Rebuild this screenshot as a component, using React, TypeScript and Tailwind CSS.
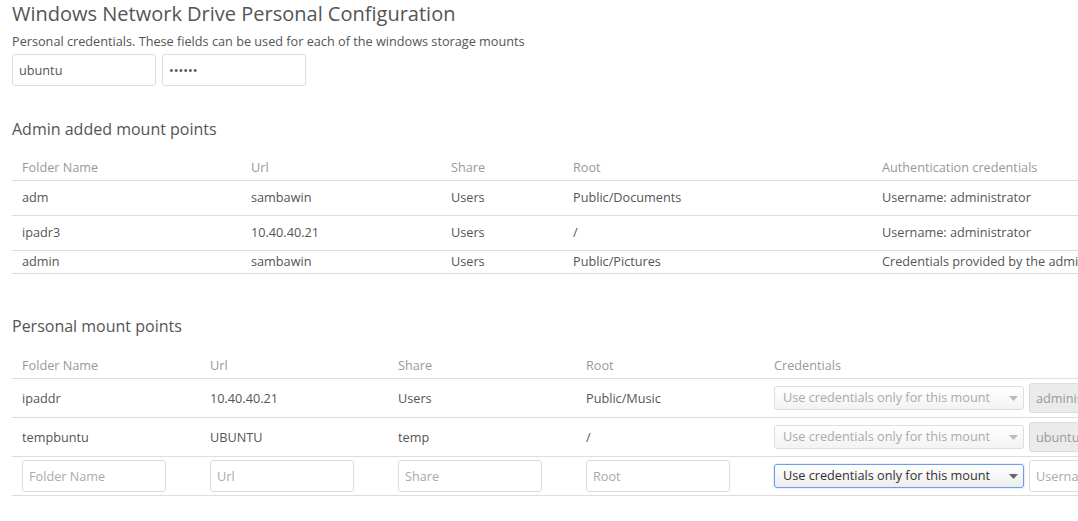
import React from 'react';

const adminMounts = [
  { name: 'adm', url: 'sambawin', share: 'Users', root: 'Public/Documents', auth: 'Username: administrator', h: 'h-[35px]' },
  { name: 'ipadr3', url: '10.40.40.21', share: 'Users', root: '/', auth: 'Username: administrator', h: 'h-[35px]' },
  { name: 'admin', url: 'sambawin', share: 'Users', root: 'Public/Pictures', auth: 'Credentials provided by the administrator', h: 'h-[23px]' },
];

const personalMounts = [
  { name: 'ipaddr', url: '10.40.40.21', share: 'Users', root: 'Public/Music', user: 'administrator' },
  { name: 'tempbuntu', url: 'UBUNTU', share: 'temp', root: '/', user: 'ubuntu' },
];

const inputCls =
  'h-[32px] w-[144px] rounded-[3px] border border-[#ddd] bg-white px-[6px] text-[12.7px] text-[#555] placeholder:text-[#aaa] outline-none';

const CredSelect: React.FC<{ active?: boolean }> = ({ active }) => (
  <div className="relative w-[250px] shrink-0">
    <select
      disabled={!active}
      defaultValue="mount"
      className={
        active
          ? 'h-[24px] w-full appearance-none rounded-[3px] border border-[#6d9eeb] bg-gradient-to-b from-white to-[#ededed] pl-[8px] text-[12.7px] text-[#333] outline-none shadow-[0_0_2px_rgba(80,140,230,0.5)]'
          : 'h-[24px] w-full appearance-none rounded-[3px] border border-[#ddd] bg-gradient-to-b from-white to-[#f3f3f3] pl-[8px] text-[12.7px] text-[#aaa] outline-none'
      }
    >
      <option value="mount">Use credentials only for this mount</option>
    </select>
    <svg className="pointer-events-none absolute right-[6px] top-[10px]" width="9" height="5" viewBox="0 0 9 5">
      <path d="M0 0h9L4.5 5z" fill={active ? '#666' : '#bbb'} />
    </svg>
  </div>
);

export default function App() {
  return (
    <div className="w-[1078px] h-[521px] overflow-hidden bg-white pl-[12px] font-['Open_Sans',sans-serif] text-[#555]">
      <h1 className="text-[20px] leading-[28px] font-normal text-[#555]">Windows Network Drive Personal Configuration</h1>
      <p className="mt-[4px] text-[12.7px] leading-[18px]">
        Personal credentials. These fields can be used for each of the windows storage mounts
      </p>
      <div className="mt-[4px] flex gap-[6px]">
        <input className={inputCls} defaultValue="ubuntu" />
        <input className={inputCls} type="password" defaultValue="ubuntu" />
      </div>

      <h2 className="mt-[32px] text-[16px] leading-[22px] font-normal">Admin added mount points</h2>
      <table className="mt-[14px] table-fixed w-[1200px] text-[12.7px] text-left">
        <colgroup>
          <col className="w-[229px]" />
          <col className="w-[200px]" />
          <col className="w-[122px]" />
          <col className="w-[309px]" />
          <col />
        </colgroup>
        <thead>
          <tr className="h-[26px] border-b border-[#ddd] text-[#999]">
            <th className="pl-[10px] pt-[2px] font-normal">Folder Name</th>
            <th className="pl-[10px] pt-[2px] font-normal">Url</th>
            <th className="pl-[10px] pt-[2px] font-normal">Share</th>
            <th className="pl-[10px] pt-[2px] font-normal">Root</th>
            <th className="pl-[10px] pt-[2px] font-normal">Authentication credentials</th>
          </tr>
        </thead>
        <tbody>
          {adminMounts.map((m) => (
            <tr key={m.name} className={`${m.h} border-b border-[#ddd]`}>
              <td className="pl-[10px] pt-[1px]">{m.name}</td>
              <td className="pl-[10px] pt-[1px]">{m.url}</td>
              <td className="pl-[10px] pt-[1px]">{m.share}</td>
              <td className="pl-[10px] pt-[1px]">{m.root}</td>
              <td className="pl-[10px] pt-[1px] whitespace-nowrap">{m.auth}</td>
            </tr>
          ))}
        </tbody>
      </table>

      <h2 className="mt-[41px] text-[16px] leading-[22px] font-normal">Personal mount points</h2>
      <table className="mt-[16px] table-fixed w-[1300px] text-[12.7px] text-left">
        <colgroup>
          <col className="w-[188px]" />
          <col className="w-[188px]" />
          <col className="w-[188px]" />
          <col className="w-[188px]" />
          <col />
        </colgroup>
        <thead>
          <tr className="h-[26px] border-b border-[#ddd] text-[#999]">
            <th className="pl-[10px] font-normal">Folder Name</th>
            <th className="pl-[10px] font-normal">Url</th>
            <th className="pl-[10px] font-normal">Share</th>
            <th className="pl-[10px] font-normal">Root</th>
            <th className="pl-[10px] font-normal">Credentials</th>
          </tr>
        </thead>
        <tbody>
          {personalMounts.map((m) => (
            <tr key={m.name} className="h-[39px] border-b border-[#ddd]">
              <td className="pl-[10px] pt-[1px]">{m.name}</td>
              <td className="pl-[10px] pt-[1px]">{m.url}</td>
              <td className="pl-[10px] pt-[1px]">{m.share}</td>
              <td className="pl-[10px] pt-[1px]">{m.root}</td>
              <td className="pl-[10px]">
                <div className="flex items-center gap-[5px]">
                  <CredSelect />
                  <input
                    disabled
                    className="h-[30px] w-[144px] rounded-[3px] border border-[#ddd] bg-[#ebebeb] px-[6px] text-[12.7px] text-[#999]"
                    defaultValue={m.user}
                  />
                </div>
              </td>
            </tr>
          ))}
          <tr className="h-[39px] border-b border-[#ddd]">
            <td className="pl-[10px]"><input className={inputCls} placeholder="Folder Name" /></td>
            <td className="pl-[10px]"><input className={inputCls} placeholder="Url" /></td>
            <td className="pl-[10px]"><input className={inputCls} placeholder="Share" /></td>
            <td className="pl-[10px]"><input className={inputCls} placeholder="Root" /></td>
            <td className="pl-[10px]">
              <div className="flex items-center gap-[5px]">
                <CredSelect active />
                <input className={`${inputCls} h-[30px]`} placeholder="Username" />
              </div>
            </td>
          </tr>
        </tbody>
      </table>
    </div>
  );
}
